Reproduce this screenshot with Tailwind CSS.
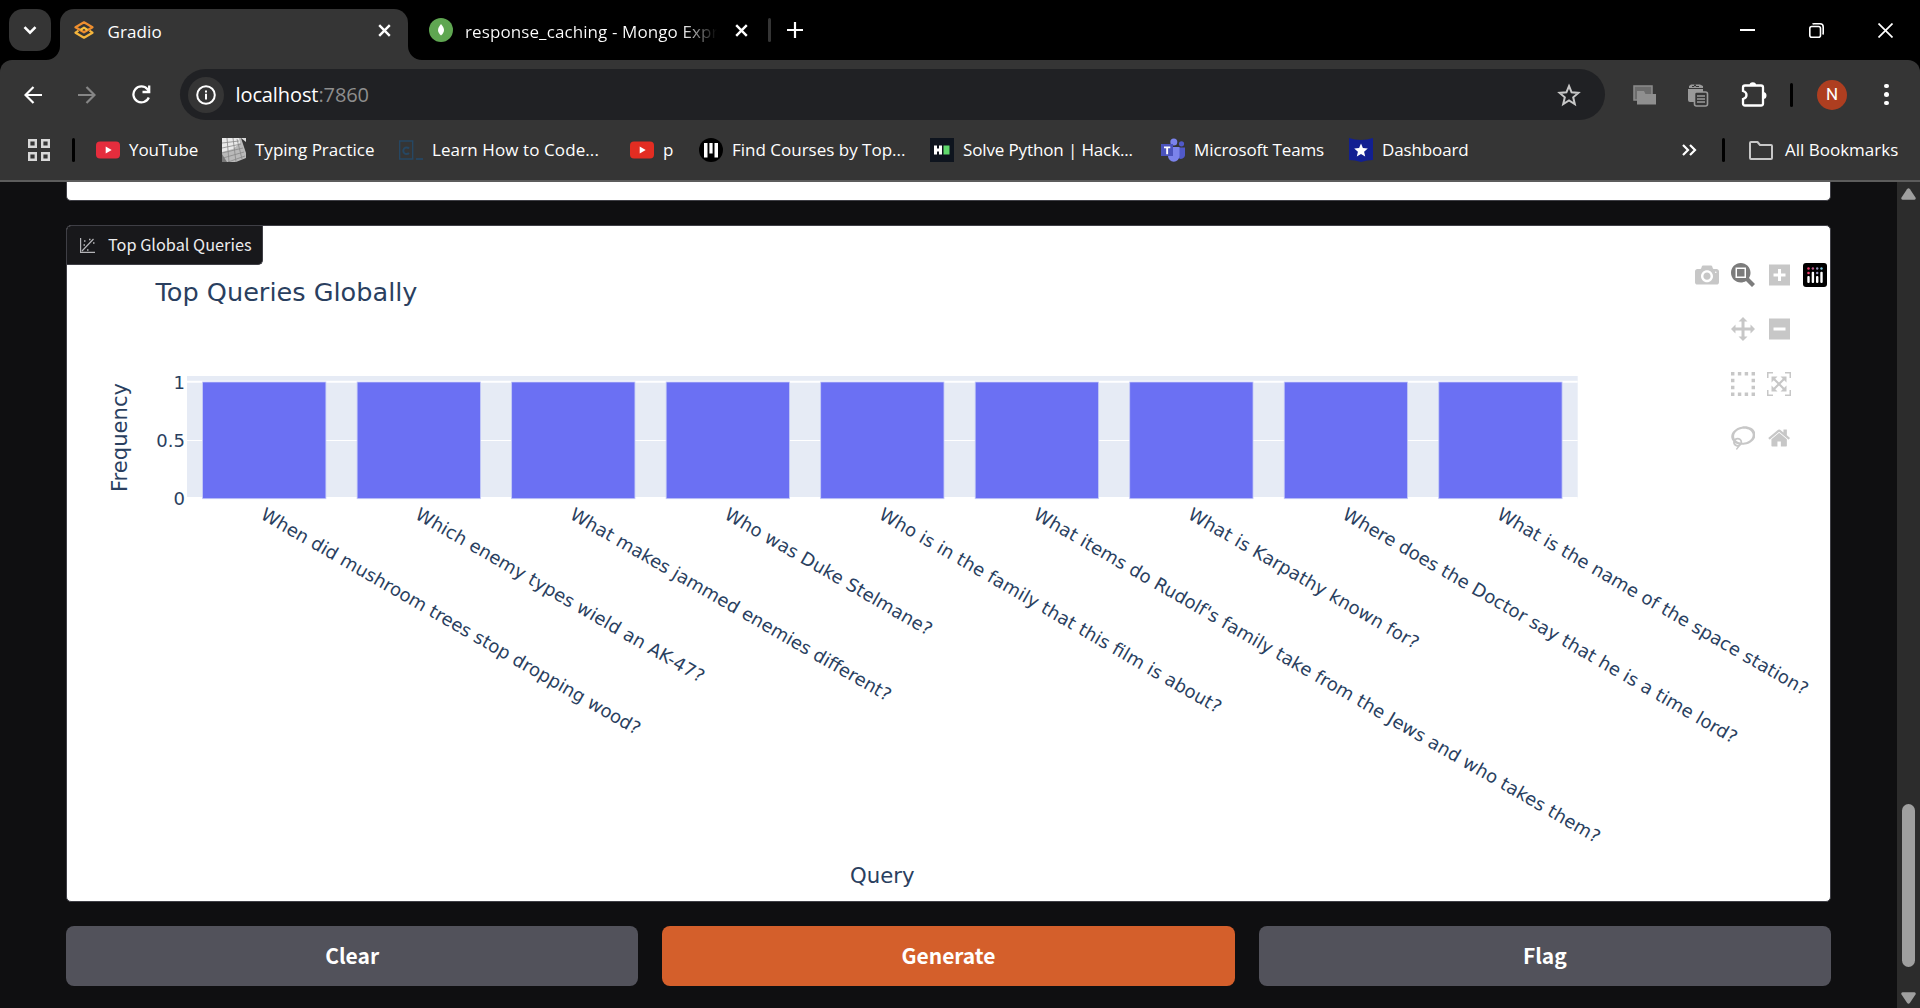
<!DOCTYPE html>
<html lang="en">
<head>
<meta charset="utf-8">
<title>Gradio</title>
<script src="https://cdn.jsdelivr.net/npm/@tailwindcss/browser@4"></script>
</head>
<body class="h-[1008px] w-[1920px] overflow-hidden bg-black font-['Open_Sans',sans-serif] text-white">
<div class="flex h-full flex-col">

  <!-- Tab strip -->
  <div class="flex h-[60px] shrink-0 items-start pt-[9px]">
    <div class="ml-[9px] flex size-[42px] items-center justify-center rounded-[14px] bg-[#353535]">
      <svg class="size-[14px]" viewBox="0 0 14 14" fill="none" stroke="#fff" stroke-width="2.6"><path d="M1.5 4.2 7 9.7l5.5-5.5"/></svg>
    </div>
    <div class="relative ml-[9px] flex h-[51px] w-[348px] items-center rounded-t-[14px] bg-[#353535] pb-[9px]">
      <svg class="absolute -left-[14px] bottom-0 size-[14px]" viewBox="0 0 14 14"><path d="M14 0v14H0A14 14 0 0 0 14 0z" fill="#353535"/></svg>
      <svg class="absolute -right-[14px] bottom-0 size-[14px]" viewBox="0 0 14 14"><path d="M0 0v14h14A14 14 0 0 1 0 0z" fill="#353535"/></svg>
      <svg class="ml-[14px] h-[18px] w-[20px]" viewBox="0 0 20 18" fill="none" stroke-width="2.2" stroke-linejoin="round">
        <path d="M10 11.300 1.500 6.300 10 1.300l8.500 5L10 11.300 6.500 9.200" stroke="#ee8e2f"/>
        <path d="M4.500 9.700 1.500 11.700l8.500 5 8.500-5-3-2" stroke="#f5b53c"/><path d="M13.500 9 10 6.700 6.500 9" stroke="#f9c13e"/>
      </svg>
      <span class="mt-[3px] ml-[13.500px] text-[17px] tracking-[0.100px]">Gradio</span>
      <svg class="mr-[17px] ml-auto size-[13px]" viewBox="0 0 13 13" stroke="#fff" stroke-width="2.4"><path d="m1.200 1.200 10.600 10.600M11.800 1.200 1.200 11.800"/></svg>
    </div>
    <div class="flex h-[42px] w-[362px] items-center pl-[21px]">
      <svg class="size-6" viewBox="0 0 24 24"><circle cx="12" cy="12" r="12" fill="#5fa651"/><path d="M12 6c4 4.500 4 8 0 11.500C8 14 8 10.500 12 6z" fill="#fff"/></svg>
      <span class="mt-[3px] ml-[12px] w-[252px] overflow-hidden bg-linear-to-r from-white from-86% to-transparent to-100% bg-clip-text text-[17px] tracking-[0.100px] whitespace-nowrap text-transparent">response_caching - Mongo Expr</span>
      <svg class="ml-[18px] size-[13px] shrink-0" viewBox="0 0 13 13" stroke="#fff" stroke-width="2.4"><path d="m1.200 1.200 10.600 10.600M11.800 1.200 1.200 11.800"/></svg>
    </div>
    <div class="mt-[9px] -ml-[2px] h-6 w-[3px] rounded bg-[#353535]"></div>
    <svg class="mt-[13px] ml-[16px] size-4" viewBox="0 0 16 16" stroke="#fff" stroke-width="2.200"><path d="M8 0v16M0 8h16"/></svg>
    <div class="ml-auto flex h-[42px] items-center gap-[54px] pr-[27px]">
      <svg class="size-[15px]" viewBox="0 0 15 15" stroke="#fff" stroke-width="2"><path d="M0 7h15"/></svg>
      <svg class="size-[15px]" viewBox="0 0 15 15" fill="none" stroke="#fff" stroke-width="1.600"><rect x=".8" y="3.500" width="10.700" height="10.700" rx="2"/><path d="M3.500 1.200Q4 .8 5 .8h6a3.200 3.200 0 0 1 3.200 3.200v6q0 1-.5 1.500"/></svg>
      <svg class="size-[15px]" viewBox="0 0 15 15" stroke="#fff" stroke-width="1.700"><path d="m.5.5 14 14M14.500.5l-14 14"/></svg>
    </div>
  </div>

  <!-- Address bar -->
  <div class="flex h-[69px] shrink-0 items-center rounded-t-[12px] bg-[#353535]">
    <svg class="ml-6 size-[18px]" viewBox="0 0 18 18" fill="none" stroke="#fff" stroke-width="2.200"><path d="M18 9H1.500M9.500 1 1.500 9l8 8"/></svg>
    <svg class="ml-9 size-[18px]" viewBox="0 0 18 18" fill="none" stroke="#868686" stroke-width="2.200"><path d="M0 9h16.500M8.500 1l8 8-8 8"/></svg>
    <svg class="ml-9 size-[19px]" viewBox="0 0 19 19" fill="none" stroke="#fff" stroke-width="2.300"><path d="M16.800 12.500A8 8 0 1 1 15.500 4.200l2 2.300M17.200.5v6.500h-6.700"/></svg>
    <div class="ml-[29px] flex h-[51px] w-[1425px] items-center rounded-full bg-[#202124]">
      <div class="ml-[7.500px] flex size-9 items-center justify-center rounded-full bg-[#353535]">
        <svg class="size-[20px]" viewBox="0 0 20 20"><circle cx="10" cy="10" r="8.800" fill="none" stroke="#fff" stroke-width="2"/><path d="M9 8.800h2v5.700H9zM9 5.400h2v2H9z" fill="#fff"/></svg>
      </div>
      <span class="ml-[12px] text-[20px] tracking-[-0.100px]">localhost<span class="text-[#8e8e8e]">:7860</span></span>
      <svg class="mr-[24px] ml-auto size-[24px]" viewBox="0 0 24 24" fill="none" stroke="#c7c7c7" stroke-width="2"><path d="m12 3 2.600 6.300 6.800.6-5.200 4.400 1.600 6.700-5.800-3.600L6.200 21l1.600-6.700L2.600 9.900l6.800-.6z"/></svg>
    </div>
    <svg class="ml-7 h-[20px] w-[24px]" viewBox="0 0 24 20"><path d="M1 1h18v14H1z" fill="#6c6c6c" stroke="#8c8c8c" stroke-width="1.500"/><path d="M4 6h7l1.500 3H23v10.500H4z" fill="#8f8f8f"/></svg>
    <svg class="ml-[30px] size-6" viewBox="0 0 24 24"><path d="M1 6h15v13H3a2 2 0 0 1-2-2zM2 5V3l2-1.500h9L16 3v2z" fill="#9a9a9a"/><path d="M5 3.500h2l1-2 1 2h3" stroke="#353535" fill="none"/><rect x="7.500" y="9" width="13" height="14" rx="2" fill="#353535" stroke="#9a9a9a" stroke-width="1.600"/><path d="M10 13h8M10 16h8M10 19h8" stroke="#9a9a9a" stroke-width="1.600"/></svg>
    <svg class="mb-[2px] ml-[30px] h-[26px] w-[27px]" viewBox="0 0 27 26"><path d="M4 4.500h16q2 0 2 2v16q0 2-2 2H4q-2 0-2-2V18q3.500-1 3.500-4T2 10V6.500q0-2 2-2z" fill="none" stroke="#fff" stroke-width="2.300"/><path d="M8.500 4.500a3.300 3.300 0 0 1 6.600 0zM22 11a3.500 3.500 0 0 1 0 7z" fill="#fff"/></svg>
    <div class="ml-[22px] h-6 w-[3px] rounded bg-black"></div>
    <div class="ml-6 flex size-[30px] items-center justify-center rounded-full bg-[#ae3e20] font-[Roboto,sans-serif] text-[17px]">N</div>
    <div class="ml-[37px] flex flex-col gap-1"><i class="size-[4.500px] rounded-full bg-white"></i><i class="size-[4.500px] rounded-full bg-white"></i><i class="size-[4.500px] rounded-full bg-white"></i></div>
  </div>

  <!-- Bookmarks bar -->
  <div class="flex h-[53px] shrink-0 items-center border-b-2 border-[#5c5c5c] bg-[#353535] pb-[9px] text-[17px] whitespace-nowrap">
    <svg class="ml-7 size-[22px]" viewBox="0 0 22 22" fill="none" stroke="#d8d8d8" stroke-width="2.400"><path d="M1.200 1.200h6.600v6.600H1.200zM14.200 1.200h6.600v6.600h-6.600zM1.200 14.200h6.600v6.600H1.200zM14.200 14.200h6.600v6.600h-6.600z"/></svg>
    <div class="mr-[21px] ml-[22px] h-6 w-[3px] rounded bg-black"></div>
    <div class="flex w-[126px] items-center gap-[9px]"><svg class="size-6 shrink-0" viewBox="0 0 24 24"><rect y="3.500" width="24" height="17" rx="4" fill="#e52d3d"/><path d="m9.700 8.500 6 3.500-6 3.500z" fill="#fff"/></svg><span class="tracking-[-0.100px]">YouTube</span></div>
    <div class="flex w-[177px] items-center gap-[9px]"><svg class="size-6 shrink-0" viewBox="0 0 24 24"><path d="M0 0h19l5 15v5l-10 4H0z" fill="#b9b9b9"/><path d="M0 0h17l1 5-7 6-11 3z" fill="#e9e9e9"/><path d="M0 5l17-2M0 10l19-4M0 15l21-5M1 20l21-6M6 24l17-6M5 0l2 24M11 0l3 24M15 1l5 20" stroke="#888" stroke-width=".8" fill="none"/><path d="M19 0h5v4z" fill="#ddd"/><path d="M0 16l5 8H0z" fill="#777"/></svg><span>Typing Practice</span></div>
    <div class="flex w-[231px] items-center gap-[9px]"><svg class="size-6 shrink-0" viewBox="0 0 24 24" fill="none" stroke="#264763"><path d="M.7 3h13v18H.7z" stroke-width="1.400"/><path d="M10 10.500a3.300 3.300 0 1 0 0 4.500" stroke-width="2"/><path d="M17 21h7" stroke-width="1.800"/></svg><span class="tracking-[0.100px]">Learn How to Code...</span></div>
    <div class="flex w-[69px] items-center gap-[9px]"><svg class="size-6 shrink-0" viewBox="0 0 24 24"><rect y="3.500" width="24" height="17" rx="4" fill="#e32d22"/><path d="m9.700 8.500 6 3.500-6 3.500z" fill="#fff"/></svg><span>p</span></div>
    <div class="flex w-[231px] items-center gap-[9px]"><svg class="size-6 shrink-0" viewBox="0 0 24 24"><circle cx="12" cy="12" r="12" fill="#000"/><path d="M5 5h3.500v14.500H5zM10.400 5h3.200v10.500h-3.200zM15.500 5H19v14.500h-3.500z" fill="#fff"/></svg><span>Find Courses by Top...</span></div>
    <div class="flex w-[231px] items-center gap-[9px]"><svg class="size-6 shrink-0" viewBox="0 0 24 24"><path d="M0 0h24v24H0z" fill="#0e141e"/><path d="M4 7.500h3v3h2v-3h3v9H9v-3H7v3H4z" fill="#fff"/><path d="M13.500 7.500h6v9h-6z" fill="#5fd86c"/></svg><span class="tracking-[-0.130px]">Solve Python | Hack...</span></div>
    <div class="flex w-[188px] items-center gap-[9px]"><svg class="size-6 shrink-0" viewBox="0 0 24 24"><circle cx="20.500" cy="5.800" r="2.600" fill="#5059c9"/><path d="M17 9.500h7v7a4 4 0 0 1-7 3z" fill="#5059c9"/><circle cx="12.800" cy="4" r="3.500" fill="#7b83eb"/><path d="M7 9h11.500v9a5.700 5.700 0 0 1-11.500 0z" fill="#7b83eb"/><path d="M0 6h12v12H0z" fill="#4b53bc"/><path d="M3 8.500h6.300v1.800H7.100v6H5.200v-6H3z" fill="#fff"/></svg><span class="tracking-[-0.100px]">Microsoft Teams</span></div>
    <div class="flex items-center gap-[9px]"><svg class="size-6 shrink-0" viewBox="0 0 24 24"><path d="M0 0q12 4 24 0v22q-6 0-12 2-6-2-12-2z" fill="#121f91"/><path d="m12 5.500 1.900 4.600 4.900.4-3.700 3.200 1.100 4.800-4.200-2.600-4.200 2.600 1.100-4.800-3.700-3.200 4.900-.4z" fill="#fff"/></svg><span class="tracking-[-0.120px]">Dashboard</span></div>
    <svg class="ml-auto h-[12px] w-[15px]" viewBox="0 0 15 12" fill="none" stroke="#fff" stroke-width="2.200"><path d="m1 1 5 5-5 5M8 1l5 5-5 5"/></svg>
    <div class="ml-[25px] h-6 w-[3px] rounded bg-black"></div>
    <svg class="ml-6 h-[19px] w-[24px]" viewBox="0 0 24 19" fill="none" stroke="#c7c7c7" stroke-width="2" stroke-linejoin="round"><path d="M2 1h6.500L11 4h11a1 1 0 0 1 1 1v12a1 1 0 0 1-1 1H2a1 1 0 0 1-1-1V2a1 1 0 0 1 1-1z"/></svg>
    <span class="ml-[12px] w-[135px]">All Bookmarks</span>
  </div>

  <!-- Page -->
  <div class="flex min-h-0 flex-1 bg-[#0f0f11]">
    <main class="flex flex-1 flex-col pr-[66px] pl-[66px]">
      <div class="h-[19px] rounded-b-[5px] border border-t-0 border-[#3f3f46] bg-white"></div>
      <section class="relative mt-6 h-[677px] overflow-hidden rounded-[5px] border border-[#3f3f46] bg-white">
        <svg class="block h-[675px] w-[1763px]" viewBox="67 226 1763 675" font-family="DejaVu Sans, Verdana, sans-serif" fill="#2a3f5f">
          <path d="M187 376h1390.700v122.500H187z" fill="#e6ebf5"/>
          <path d="M187 381.700h1390.700" stroke="#fff" stroke-width="2"/>
          <path d="M187 440.500h1390.700" stroke="#fff" stroke-width="1.200"/>
          <path d="M187 498.500h1390.700" stroke="#fff" stroke-width="3"/>
          <g id="bars" fill="#6b70f3" stroke="#c5cbf7" stroke-width=".8"></g>
          <text x="155.500" y="300.500" font-size="25.500" textLength="262" lengthAdjust="spacingAndGlyphs">Top Queries Globally</text>
          <g font-size="18" text-anchor="end"><text x="185" y="388.500">1</text><text x="185" y="447">0.5</text><text x="185" y="505">0</text></g>
          <text transform="translate(127.300 492) rotate(-90)" font-size="21" textLength="109" lengthAdjust="spacingAndGlyphs">Frequency</text>
          <text x="850" y="882.500" font-size="21" textLength="64.500" lengthAdjust="spacingAndGlyphs">Query</text>
          <g id="ticks" font-size="18"></g>
        </svg>
        <div class="absolute top-0 left-0 flex h-[39px] w-[196px] items-center rounded-br-[5px] border-r border-b border-[#3f3f46] bg-[#18181b] pl-[13px] font-['Noto_Sans_CJK_SC',sans-serif] text-[16.300px] text-[#ececee]">
          <svg class="size-[15px]" viewBox="0 0 15 15" fill="none" stroke="#b4b4b8" stroke-width="1.200"><path d="M.6 0v14.400H15M2 13 13.500 1"/><path d="M4 3h1.500M9 1.500h1.500M13 5h1.500M3.500 7H5M7 12h1.500" stroke-width="1.500"/></svg>
          <span class="-mt-px ml-[13px] whitespace-nowrap">Top Global Queries</span>
        </div>
        <!-- Chart toolbar -->
        <div class="absolute top-[37px] right-[-3px] flex text-[#c7c7c7]">
          <div class="flex w-9 flex-col items-center"><svg class="h-6" viewBox="0 0 1000 1000" fill="currentColor"><path transform="matrix(1 0 0 -1 0 850)" d="m500 450c-83 0-150-67-150-150 0-83 67-150 150-150 83 0 150 67 150 150 0 83-67 150-150 150z m400 150h-120c-16 0-34 13-39 29l-31 93c-6 15-23 28-40 28h-340c-16 0-34-13-39-28l-31-94c-6-15-23-28-40-28h-120c-55 0-100-45-100-100v-450c0-55 45-100 100-100h800c55 0 100 45 100 100v450c0 55-45 100-100 100z m-400-550c-138 0-250 112-250 250 0 138 112 250 250 250 138 0 250-112 250-250 0-138-112-250-250-250z m365 380c-19 0-35 16-35 35 0 19 16 35 35 35 19 0 35-16 35-35 0-19-16-35-35-35z"/></svg></div>
          <div class="flex w-9 flex-col items-center gap-[30.300px]">
            <svg class="h-6 text-[#7c7c7c]" viewBox="0 0 1000 1000" fill="currentColor"><path transform="matrix(1 0 0 -1 0 850)" d="m1000-25l-250 251c40 63 63 138 63 218 0 224-182 406-407 406-224 0-406-182-406-406s183-406 407-406c80 0 155 22 218 62l250-250 125 125z m-812 250l0 438 437 0 0-438-437 0z m62 375l313 0 0-312-313 0 0 312z"/></svg>
            <svg class="h-6" viewBox="0 0 1000 1000" fill="currentColor"><path transform="matrix(1 0 0 -1 0 850)" d="m1000 350l-187 188 0-125-250 0 0 250 125 0-188 187-187-187 125 0 0-250-250 0 0 125-188-188 186-187 0 125 252 0 0-250-125 0 187-188 188 188-125 0 0 250 250 0 0-126 187 188z"/></svg>
            <svg class="h-6" viewBox="0 0 1000 1000" fill="currentColor"><path transform="matrix(1 0 0 -1 0 850)" d="m0 850l0-143 143 0 0 143-143 0z m286 0l0-143 143 0 0 143-143 0z m285 0l0-143 143 0 0 143-143 0z m286 0l0-143 143 0 0 143-143 0z m-857-286l0-143 143 0 0 143-143 0z m857 0l0-143 143 0 0 143-143 0z m-857-285l0-143 143 0 0 143-143 0z m857 0l0-143 143 0 0 143-143 0z m-857-286l0-143 143 0 0 143-143 0z m286 0l0-143 143 0 0 143-143 0z m285 0l0-143 143 0 0 143-143 0z m286 0l0-143 143 0 0 143-143 0z"/></svg>
            <svg class="h-6" viewBox="0 0 1031 1000" fill="currentColor"><path transform="matrix(1 0 0 -1 0 850)" d="m1018 538c-36 207-290 336-568 286-277-48-473-256-436-463 10-57 36-108 76-151-13-66 11-137 68-183 34-28 75-41 114-42l-55-70 0 0c-2-1-3-2-4-3-10-14-8-34 5-45 14-11 34-8 45 4 1 1 2 3 2 5l0 0 113 140c16 11 31 24 45 40 4 3 6 7 8 11 48-3 100 0 151 9 278 48 473 255 436 462z m-624-379c-80 14-149 48-197 96 42 42 109 47 156 9 33-26 47-66 41-105z m-187-74c-19 16-33 37-39 60 50-32 109-55 174-68-42-25-95-24-135 8z m360 75c-34-7-69-9-102-8 8 62-16 128-68 170-73 59-175 54-244-5-9 20-16 40-20 61-28 159 121 317 333 354s407-60 434-217c28-159-121-318-333-355z"/></svg>
          </div>
          <div class="flex w-9 flex-col items-center gap-[30.300px]">
            <svg class="h-6" viewBox="0 0 875 1000" fill="currentColor"><path transform="matrix(1 0 0 -1 0 850)" d="m1 787l0-875 875 0 0 875-875 0z m687-500l-187 0 0-187-125 0 0 187-188 0 0 125 188 0 0 187 125 0 0-187 187 0 0-125z"/></svg>
            <svg class="h-6" viewBox="0 0 875 1000" fill="currentColor"><path transform="matrix(1 0 0 -1 0 850)" d="m0 788l0-876 875 0 0 876-875 0z m688-500l-500 0 0 125 500 0 0-125z"/></svg>
            <svg class="h-6" viewBox="0 0 1000 1000" fill="currentColor"><path transform="matrix(1 0 0 -1 0 850)" d="m250 850l-187 0-63 0 0-62 0-188 63 0 0 188 187 0 0 62z m688 0l-188 0 0-62 188 0 0-188 62 0 0 188 0 62-62 0z m-875-938l0 188-63 0 0-188 0-62 63 0 187 0 0 62-187 0z m875 188l0-188-188 0 0-62 188 0 62 0 0 62 0 188-62 0z m-125 188l-1 0-93-94-156 156 156 156 92-93 2 0 0 250-250 0 0-2 93-92-156-156-156 156 94 92 0 2-250 0 0-250 0 0 93 93 157-156-157-156-93 94 0 0 0-250 250 0 0 0-94 93 156 157 156-157-93-93 0 0 250 0 0 250z"/></svg>
            <svg class="h-6" viewBox="0 0 928.600 1000" fill="currentColor"><path transform="matrix(1 0 0 -1 0 850)" d="m786 296v-267q0-15-11-26t-25-10h-214v214h-143v-214h-214q-15 0-25 10t-11 26v267q0 1 0 2t0 2l321 264 321-264q1-1 1-4z m124 39l-34-41q-5-5-12-6h-2q-7 0-12 3l-386 322-386-322q-7-4-13-4-7 2-12 7l-35 41q-4 5-3 13t6 12l401 334q18 15 42 15t43-15l136-114v109q0 8 5 13t13 5h107q8 0 13-5t5-13v-227l122-102q5-5 6-12t-4-13z"/></svg>
          </div>
          <div class="flex w-9 flex-col items-center"><svg class="size-6" viewBox="0 0 24 24"><rect width="24" height="24" rx="3" fill="#000"/><g fill="#fff"><rect x="4.300" y="13" width="2.400" height="7" rx="1"/><rect x="8.700" y="8.800" width="2.400" height="11.200" rx="1"/><rect x="13" y="13" width="2.400" height="7" rx="1"/><rect x="17.300" y="8.800" width="2.400" height="11.200" rx="1"/></g><g fill="#ef3e6c"><circle cx="5.500" cy="5.500" r="1.300"/><circle cx="5.500" cy="10" r="1.300"/></g><circle cx="9.900" cy="5.500" r="1.200" fill="#c05a8c"/><g fill="#9a9ac0"><circle cx="14.200" cy="5.500" r="1.200"/><circle cx="14.200" cy="10" r="1.200"/></g><circle cx="18.500" cy="5.500" r="1.200" fill="#7fc8e0"/></svg></div>
        </div>
      </section>
      <div class="mt-6 grid h-[60px] grid-cols-3 gap-6 font-['Noto_Sans_CJK_SC',sans-serif] text-[21px] leading-none font-bold">
        <button class="rounded-[8px] bg-[#52525b] pb-px">Clear</button>
        <button class="rounded-[8px] bg-[#d45f2b] pb-px">Generate</button>
        <button class="rounded-[8px] bg-[#52525b] pb-px">Flag</button>
      </div>
    </main>
    <!-- Scrollbar -->
    <div class="flex w-[23px] flex-col items-center bg-[#2c2c2c]">
      <svg class="mt-[6px] h-[12px] w-[15px]" viewBox="0 0 15 12"><path d="M6 1.200Q7.500-.6 9 1.200l5.500 8.300q.8 2-1 2.300h-12q-1.800-.3-1-2.300z" fill="#9f9f9f"/></svg>
      <div class="mt-[604px] h-[163px] w-[13px] rounded-full bg-[#9f9f9f]"></div>
      <svg class="mt-[25px] h-[12px] w-[15px]" viewBox="0 0 15 12"><path d="M6 10.800q1.500 1.800 3 0l5.500-8.300q.8-2-1-2.300h-12q-1.800.3-1 2.300z" fill="#9f9f9f"/></svg>
    </div>
  </div>
</div>
<script>
  // Each query with the extra advance its label is spread over.
  const queries = [
    ["When did mushroom trees stop dropping wood?", 2.6], ["Which enemy types wield an AK-47?", 4],
    ["What makes jammed enemies different?", 2.6], ["Who was Duke Stelmane?", 2.6],
    ["Who is in the family that this film is about?", 5.4],
    ["What items do Rudolf's family take from the Jews and who takes them?", 9.4],
    ["What is Karpathy known for?", 4], ["Where does the Doctor say that he is a time lord?", 4],
    ["What is the name of the space station?", 2.6]
  ];
  const ns = "http://www.w3.org/2000/svg", step = 154.52;
  queries.forEach(([q, extra], i) => {
    const bar = document.createElementNS(ns, "rect");
    Object.entries({ x: 202.6 + i * step, y: 382, width: 123.3, height: 116.7 }).forEach(([k, v]) => bar.setAttribute(k, v));
    document.getElementById("bars").append(bar);
    const label = document.createElementNS(ns, "text");
    label.setAttribute("transform", `translate(${259.6 + i * step} 518) rotate(30)`);
    label.textContent = q;
    document.getElementById("ticks").append(label);
    label.setAttribute("textLength", label.getComputedTextLength() + extra);
  });
</script>
</body>
</html>
